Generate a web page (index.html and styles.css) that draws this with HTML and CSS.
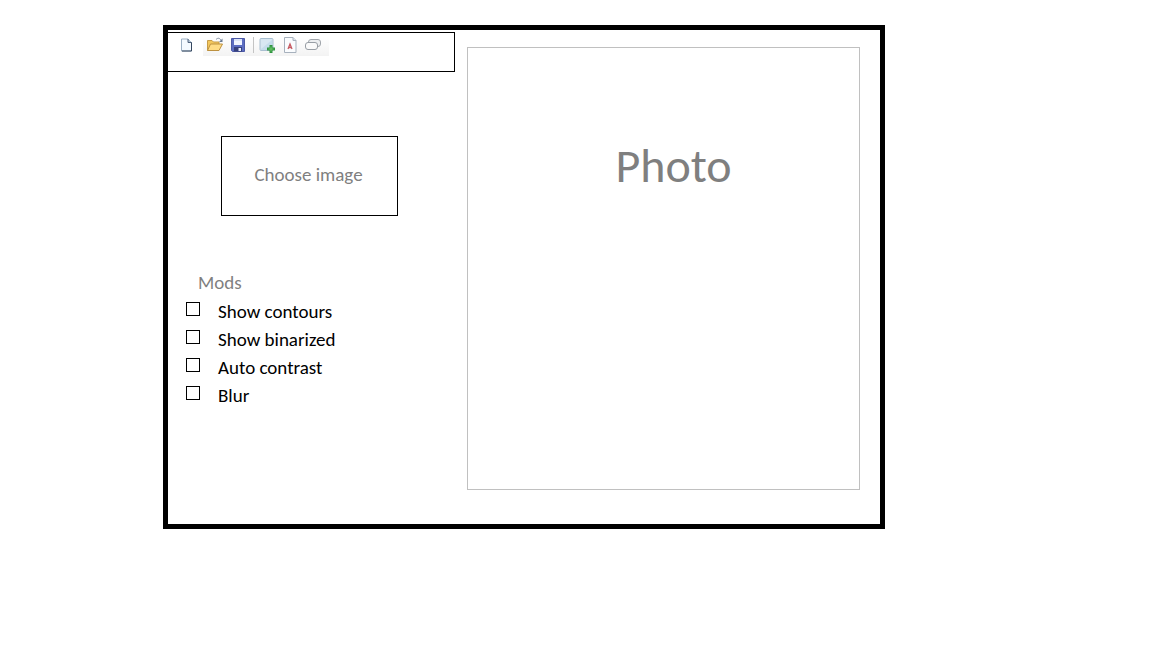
FILE: index.html
```html
<!DOCTYPE html>
<html lang="en">
<head>
<meta charset="utf-8">
<meta name="viewport" content="width=device-width, initial-scale=1">
<title>Photo</title>
<link rel="stylesheet" href="styles.css">
</head>
<body>
<main class="window">
  <section class="side">
    <div class="toolbar" role="toolbar" aria-label="File tools">
      <button class="tool tool-new" type="button" aria-label="New">
        <svg viewBox="0 0 16 16"><path d="M2.500 2h6.500l3.500 3.500V14H2.500z" fill="#f5faff" stroke="#9db0c4"/><path d="M9 2v3.500h3.500" fill="#b8c8da" stroke="#50637c"/><path d="M12.500 5.500V14H3" fill="none" stroke="#35475f"/></svg>
      </button>
      <div class="strip">
        <button class="tool" type="button" aria-label="Open">
          <svg viewBox="0 0 16 16"><path d="M.5 13.500V3.500h4.500l1.500 1.500h5.500v3" fill="#f3c75c" stroke="#c79c48"/><path d="M.5 13.500l3-6.500H15.500l-3.500 6.500z" fill="#ffdc85" stroke="#bd9140"/><path d="M9 2.500c2-2 4-1.500 5 1" fill="none" stroke="#8492a5"/><path d="M15.500 1.500v3.500h-3.500z" fill="#6c7d94"/></svg>
        </button>
        <button class="tool" type="button" aria-label="Save">
          <svg viewBox="0 0 16 16"><path d="M1.500 1.500h13v13h-12l-1-1z" fill="#5c6dc2" stroke="#4c59a5"/><path d="M4 2h8v6H4z" fill="#f0f4ff"/><path d="M4 2h8v2H4z" fill="#dbe4f8"/><path d="M4 10h8v4.500H4z" fill="#36407c"/><path d="M8.500 11H11v3H8.500z" fill="#e9edfa"/></svg>
        </button>
        <span class="divider"></span>
        <button class="tool" type="button" aria-label="Add image">
          <svg viewBox="0 0 16 16"><rect x="1" y="1.500" width="13" height="12" rx="1" fill="#d8e7f2" stroke="#a9bfd0"/><path d="M2 12L13 3v10H2z" fill="#c5dceb"/><path d="M10.500 8h3v2.500H16v3h-2.500V16h-3v-2.500H8v-3h2.500z" fill="#2f9440"/><path d="M12 9.500v5M9.500 12h5" stroke="#70c968"/></svg>
        </button>
        <button class="tool" type="button" aria-label="Add text">
          <svg viewBox="0 0 16 16"><path d="M2.500.5h8.500l3 3v12H2.500z" fill="#fafcfe" stroke="#a7b1bd"/><path d="M11 .5v3h3" fill="#dbe3eb" stroke="#a7b1bd"/><path d="M6 12l2-5 2 5M6.500 10.500h3" fill="none" stroke="#c65a62" stroke-width="1.300"/></svg>
        </button>
        <button class="tool" type="button" aria-label="Add shape">
          <svg viewBox="0 0 16 16"><rect x="3.500" y="2.500" width="12" height="7" rx="2.500" fill="#eceef0" stroke="#a1a6ac"/><rect x=".5" y="5.500" width="12" height="7" rx="2.500" fill="#fafafa" stroke="#979da4"/></svg>
        </button>
      </div>
    </div>
    <button class="choose" type="button">Choose image</button>
    <fieldset class="mods">
      <legend class="mods-title">Mods</legend>
      <label class="mod"><input class="box" type="checkbox"><span class="mod-text">Show contours</span></label>
      <label class="mod"><input class="box" type="checkbox"><span class="mod-text">Show binarized</span></label>
      <label class="mod"><input class="box" type="checkbox"><span class="mod-text">Auto contrast</span></label>
      <label class="mod"><input class="box" type="checkbox"><span class="mod-text">Blur</span></label>
    </fieldset>
  </section>
  <section class="photo">
    <h1 class="photo-title">Photo</h1>
  </section>
</main>
</body>
</html>
```
FILE: styles.css
```css
* {
  box-sizing: border-box;
}

body {
  margin: 0;
  padding: 25px 267px 24px 163px;
  background: #fff;
  color: #000;
  font-family: Carlito, Calibri, Lato, sans-serif;
  font-size: 19px;
  line-height: 24px;
}

.window {
  display: grid;
  grid-template-columns: 287px 1fr;
  column-gap: 12px;
  border: 5px solid #000;
  padding: 2px 20px 34px 0;
}

.side {
  display: flex;
  flex-direction: column;
  align-items: flex-start;
}

.toolbar {
  display: flex;
  align-items: flex-start;
  gap: 8px;
  width: 100%;
  height: 40px;
  padding: 4px 0 0 11px;
  border: 1px solid #000;
  border-left: 0;
}

.strip {
  display: flex;
  align-items: flex-start;
  gap: 7px;
  height: 19px;
  padding: 0 8px 0 4px;
  background: linear-gradient(#fff, #f3f3f3);
}

.tool {
  width: 16px;
  height: 16px;
  padding: 0;
  border: 0;
  background: none;
}

.tool svg {
  display: block;
  width: 100%;
  height: 100%;
}

.divider {
  width: 1px;
  height: 16px;
  margin-right: -2px;
  background: #c4c4c4;
}

.choose {
  width: 177px;
  height: 80px;
  margin: 64px 0 0 53px;
  padding: 0 2px 2px 0;
  border: 1px solid #000;
  background: #fff;
  color: #7f7f7f;
  font: inherit;
}

.mods {
  display: flex;
  flex-direction: column;
  margin: 55px 0 0 18px;
  padding: 0;
  border: 0;
}

.mods-title {
  padding: 0 12px;
  color: #7f7f7f;
}

.mod {
  display: flex;
  align-items: center;
  gap: 18px;
  height: 28px;
}

.box {
  appearance: none;
  width: 14px;
  height: 14px;
  margin: 0;
  border: 1px solid #000;
  background: #fff;
}

.box:checked {
  background: #000;
  box-shadow: inset 0 0 0 2px #fff;
}

.mod-text {
  padding-top: 6px;
}

.photo {
  min-height: 443px;
  margin-top: 15px;
  padding: 90px 0 0 20px;
  border: 1px solid #c0c0c0;
  text-align: center;
}

.photo-title {
  margin: 0;
  color: #7f7f7f;
  font-size: 48px;
  font-weight: 400;
  line-height: 56px;
}
```
